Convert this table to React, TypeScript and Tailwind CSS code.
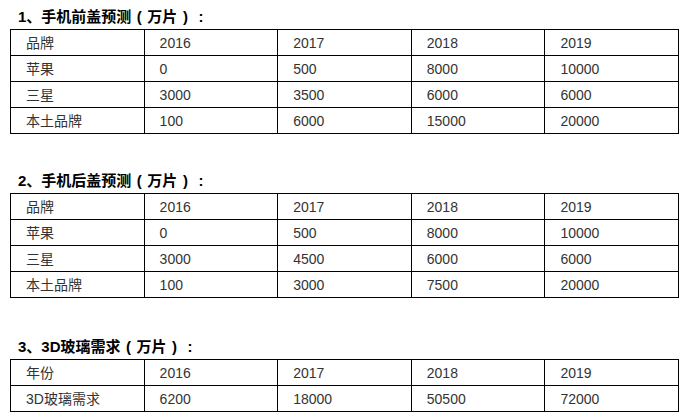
import React from 'react';

type Section = {
  num: string;
  name: string;
  rows: string[][];
  mt: string;
};

const SECTIONS: Section[] = [
  {
    num: '1、',
    name: '手机前盖预测',
    mt: 'mt-[5px]',
    rows: [
      ['品牌', '2016', '2017', '2018', '2019'],
      ['苹果', '0', '500', '8000', '10000'],
      ['三星', '3000', '3500', '6000', '6000'],
      ['本土品牌', '100', '6000', '15000', '20000'],
    ],
  },
  {
    num: '2、',
    name: '手机后盖预测',
    mt: 'mt-[35px]',
    rows: [
      ['品牌', '2016', '2017', '2018', '2019'],
      ['苹果', '0', '500', '8000', '10000'],
      ['三星', '3000', '4500', '6000', '6000'],
      ['本土品牌', '100', '3000', '7500', '20000'],
    ],
  },
  {
    num: '3、',
    name: '3D玻璃需求',
    mt: 'mt-[37px]',
    rows: [
      ['年份', '2016', '2017', '2018', '2019'],
      ['3D玻璃需求', '6200', '18000', '50500', '72000'],
    ],
  },
];

const App: React.FC = () => {
  return (
    <div
      className="w-[686px] h-[420px] overflow-hidden bg-white text-[#333]"
      style={{ fontFamily: '"Liberation Sans", Arial, "Noto Sans CJK SC", sans-serif' }}
    >
      {SECTIONS.map((s) => (
        <div key={s.num} className={s.mt}>
          {/* title: parens drawn half-width and centred in a full cell */}
          <h3 className="ml-[18px] flex h-[24px] items-center whitespace-nowrap text-[15px] leading-[24px] font-bold text-black">
            <span>
              {s.num}
              {s.name}
            </span>
            <span className="inline-block w-[16px] text-center">(</span>
            <span>万片</span>
            <span className="inline-block w-[16px] text-center">)</span>
            <span className="inline-block w-[15px] text-center">:</span>
          </h3>
          <table className="ml-[10px] w-[669px] table-fixed border-collapse text-[14px]">
            <tbody>
              {s.rows.map((row, i) => (
                <tr key={i}>
                  {row.map((cell, j) => (
                    <td key={j} className="h-[26px] border border-black px-[15px] py-0 leading-[16px] align-middle">
                      {cell}
                    </td>
                  ))}
                </tr>
              ))}
            </tbody>
          </table>
        </div>
      ))}
    </div>
  );
};

export default App;
